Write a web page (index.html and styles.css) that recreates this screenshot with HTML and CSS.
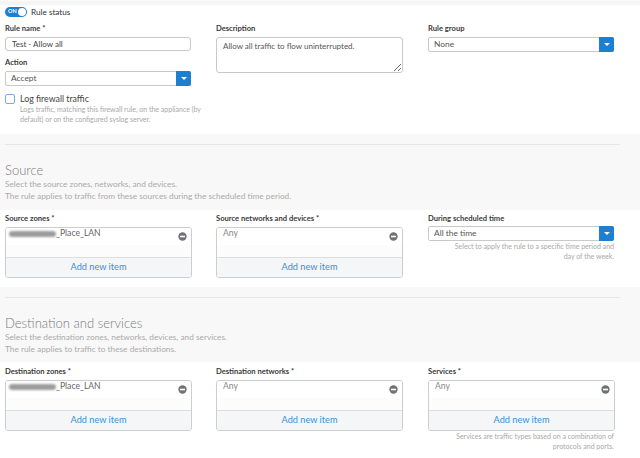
FILE: index.html
```html
<!DOCTYPE html>
<html lang="en">
<head>
<meta charset="utf-8">
<title>Rule</title>
<link rel="stylesheet" href="styles.css">
</head>
<body>
<div class="strip"></div>

<section class="general">
  <div class="status">
    <span class="toggle"><span class="on">ON</span><span class="knob"></span></span>
    <span class="status-label">Rule status</span>
  </div>
  <div class="grid">
    <div class="col">
      <div class="label">Rule name *</div>
      <div class="input">Test - Allow all</div>
      <div class="label gap">Action</div>
      <div class="select tall"><span class="sel-text">Accept</span><span class="sel-btn"><span class="tri"></span></span></div>
      <div class="check-row"><span class="checkbox"></span><span class="check-label">Log firewall traffic</span></div>
      <div class="help indent">Logs traffic, matching this firewall rule, on the appliance (by<br>default) or on the configured syslog server.</div>
    </div>
    <div class="col">
      <div class="label">Description</div>
      <textarea class="textarea" readonly>Allow all traffic to flow uninterrupted.</textarea>
    </div>
    <div class="col">
      <div class="label">Rule group</div>
      <div class="select"><span class="sel-text">None</span><span class="sel-btn"><span class="tri"></span></span></div>
    </div>
  </div>
</section>

<section class="head">
  <div class="rule"></div>
  <h2 class="title">Source</h2>
  <p class="sub">Select the source zones, networks, and devices.<br>The rule applies to traffic from these sources during the scheduled time period.</p>
</section>

<section class="row src">
  <div class="grid">
    <div class="col">
      <div class="label">Source zones *</div>
      <div class="box">
        <div class="item"><span class="item-text"><span class="blur"></span>_Place_LAN</span><svg class="minus" viewBox="0 0 10 10"><circle cx="5" cy="5" r="4.6" fill="#6d7277"/><rect x="2.2" y="4.1" width="5.6" height="1.8" fill="#fff"/></svg></div>
        <div class="filler"></div>
        <div class="add">Add new item</div>
      </div>
    </div>
    <div class="col">
      <div class="label">Source networks and devices *</div>
      <div class="box">
        <div class="item"><span class="item-text any">Any</span><svg class="minus" viewBox="0 0 10 10"><circle cx="5" cy="5" r="4.6" fill="#6d7277"/><rect x="2.2" y="4.1" width="5.6" height="1.8" fill="#fff"/></svg></div>
        <div class="filler"></div>
        <div class="add">Add new item</div>
      </div>
    </div>
    <div class="col">
      <div class="label up">During scheduled time</div>
      <div class="select"><span class="sel-text">All the time</span><span class="sel-btn"><span class="tri"></span></span></div>
      <div class="help right">Select to apply the rule to a specific time period and<br>day of the week.</div>
    </div>
  </div>
</section>

<section class="head last">
  <div class="rule"></div>
  <h2 class="title">Destination and services</h2>
  <p class="sub">Select the destination zones, networks, devices, and services.<br>The rule applies to traffic to these destinations.</p>
</section>

<section class="row dst">
  <div class="grid">
    <div class="col">
      <div class="label">Destination zones *</div>
      <div class="box">
        <div class="item"><span class="item-text"><span class="blur"></span>_Place_LAN</span><svg class="minus" viewBox="0 0 10 10"><circle cx="5" cy="5" r="4.6" fill="#6d7277"/><rect x="2.2" y="4.1" width="5.6" height="1.8" fill="#fff"/></svg></div>
        <div class="filler"></div>
        <div class="add">Add new item</div>
      </div>
    </div>
    <div class="col">
      <div class="label">Destination networks *</div>
      <div class="box">
        <div class="item"><span class="item-text any">Any</span><svg class="minus" viewBox="0 0 10 10"><circle cx="5" cy="5" r="4.6" fill="#6d7277"/><rect x="2.2" y="4.1" width="5.6" height="1.8" fill="#fff"/></svg></div>
        <div class="filler"></div>
        <div class="add">Add new item</div>
      </div>
    </div>
    <div class="col">
      <div class="label">Services *</div>
      <div class="box">
        <div class="item"><span class="item-text any">Any</span><svg class="minus" viewBox="0 0 10 10"><circle cx="5" cy="5" r="4.6" fill="#6d7277"/><rect x="2.2" y="4.1" width="5.6" height="1.8" fill="#fff"/></svg></div>
        <div class="filler"></div>
        <div class="add">Add new item</div>
      </div>
      <div class="help right">Services are traffic types based on a combination of<br>protocols and ports.</div>
    </div>
  </div>
</section>
</body>
</html>
```

FILE: styles.css
```css
* { box-sizing: border-box; }
html, body { margin: 0; padding: 0; }
body {
  width: 640px;
  height: 458px;
  overflow: hidden;
  background: #fff;
  font-family: Lato, "Liberation Sans", sans-serif;
  color: #333;
}
.strip { height: 5px; background: #f5f5f5; border-top: 1px solid #fafafa; }

.general { height: 129px; padding: 2px 0 0 5px; background: #fff; }
.status { display: flex; align-items: center; height: 10px; }
.toggle {
  width: 22px; height: 10px; border-radius: 5px; background: #1f7fd1;
  display: flex; align-items: center; justify-content: space-between;
  padding: 0 1px 0 3px;
}
.on { color: #fff; font-size: 5.5px; font-weight: 700; line-height: 1; }
.knob { width: 8px; height: 8px; border-radius: 50%; background: #fff; }
.status-label { margin-left: 4px; font-size: 8.2px; color: #333; }

.grid {
  display: grid;
  grid-template-columns: 187px 188px 186px;
  column-gap: 24px;
  margin-top: 6px;
}
.col { display: flex; flex-direction: column; min-width: 0; }
.label { font-size: 7.6px; font-weight: 700; line-height: 10px; color: #3a3a3a; margin-bottom: 4px; white-space: nowrap; }
.label.gap { margin-top: 6px; }
.label.up { margin-bottom: 3px; }

.input {
  height: 14px; width: 186px; border: 1px solid #c9c9c9; border-radius: 3px;
  font-size: 8px; line-height: 12px; padding: 0 6px; color: #444;
}
.select {
  height: 15px; width: 186px; border: 1px solid #c9c9c9; border-radius: 2px;
  display: flex; align-items: stretch; background: #fff;
}
.sel-text { flex: 1; font-size: 8.4px; line-height: 13px; padding-left: 5px; color: #555; }
.sel-btn {
  width: 15px; margin: -1px -1px -1px 0; background: #1c7fd2; border-radius: 0 2px 2px 0;
  display: flex; align-items: center; justify-content: center;
}
.tri { width: 0; height: 0; border-left: 3px solid transparent; border-right: 3px solid transparent; border-top: 3px solid #fff; }

.check-row { display: flex; align-items: center; margin-top: 8px; height: 10px; }
.checkbox { width: 10px; height: 10px; border: 1.3px solid #79acdf; border-radius: 2px; background: #fff; }
.check-label { margin-left: 5px; font-size: 8.8px; color: #444; line-height: 10px; }
.help { font-size: 7px; line-height: 10px; color: #a8a8a8; white-space: nowrap; }
.help.indent { padding-left: 15px; }
.help.right { text-align: right; }

.textarea {
  display: block;
  width: 187px; height: 36px; border: 1px solid #c9c9c9; border-radius: 3px;
  font-family: Lato, "Liberation Sans", sans-serif;
  font-size: 8px; line-height: 10px; padding: 3px 6px; color: #555; resize: both; margin: 0; outline: none;
}

.head { background: #f8f8f8; padding: 10px 0 8px 5px; height: 76px; }
.head.last { height: 75px; padding-bottom: 7px; }
.rule { height: 1px; background: #e6e6e6; width: 615px; }
.title { margin: 17px 0 0; font-size: 13px; font-weight: 300; line-height: 16px; color: #7a7a7a; }
.sub { margin: 0; font-size: 8.3px; line-height: 12px; color: #ababab; white-space: nowrap; }

.row { background: #fff; padding-left: 5px; }
.row .grid { margin-top: 0; }
.row.src { padding-top: 3px; height: 77px; }
.row.dst { padding-top: 4px; height: 96px; }

.box { width: 187px; height: 51px; border: 1px solid #cdcdcd; border-radius: 3px; display: flex; flex-direction: column; overflow: hidden; }
.item { height: 17px; display: flex; justify-content: space-between; align-items: flex-start; background: #fff; padding: 0 4px 0 0; }
.item-text { font-size: 8.6px; line-height: 11px; color: #666; padding-left: 3px; display: flex; align-items: center; }
.item-text.any { padding-left: 6px; color: #888; }
.blur { display: inline-block; width: 47px; height: 6px; border-radius: 3px; background: #9c9c9c; filter: blur(0.9px); }
.minus { width: 9px; height: 9px; margin-top: 4px; }
.filler { height: 12px; background: #fcfcfc; }
.add { flex: 1; border-top: 1px solid #dedede; background: #f5f6f7; color: #3890da; font-size: 9.2px; text-align: center; line-height: 18px; }
```
